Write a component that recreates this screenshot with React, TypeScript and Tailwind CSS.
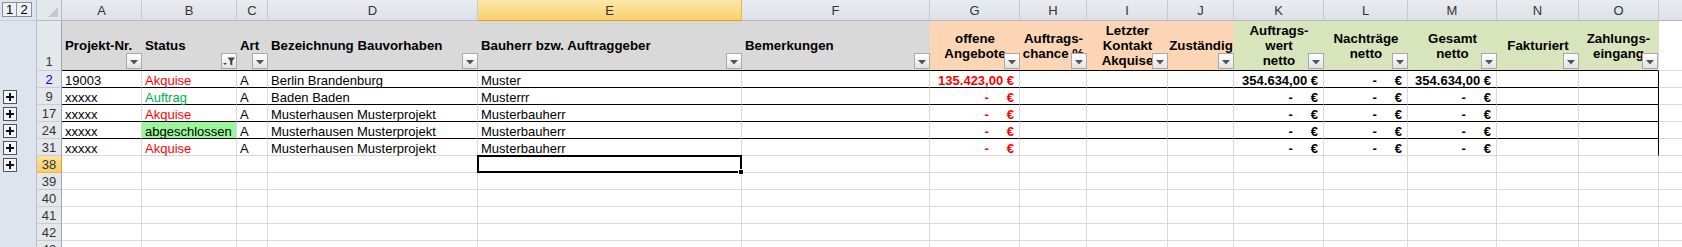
import React from 'react';

type Hdr = { lines: string[]; bg: 'gray' | 'peach' | 'green'; center?: boolean; active?: boolean };

const LETTERS = ['A', 'B', 'C', 'D', 'E', 'F', 'G', 'H', 'I', 'J', 'K', 'L', 'M', 'N', 'O'];

const HEADERS: Hdr[] = [
  { lines: ['Projekt-Nr.'], bg: 'gray' },
  { lines: ['Status'], bg: 'gray', active: true },
  { lines: ['Art'], bg: 'gray' },
  { lines: ['Bezeichnung Bauvorhaben'], bg: 'gray' },
  { lines: ['Bauherr bzw. Auftraggeber'], bg: 'gray' },
  { lines: ['Bemerkungen'], bg: 'gray' },
  { lines: ['offene', 'Angebote'], bg: 'peach', center: true },
  { lines: ['Auftrags-', 'chance %'], bg: 'peach', center: true },
  { lines: ['Letzter', 'Kontakt', 'Akquise'], bg: 'peach', center: true },
  { lines: ['Zuständig'], bg: 'peach', center: true },
  { lines: ['Auftrags-', 'wert', 'netto'], bg: 'green', center: true },
  { lines: ['Nachträge', 'netto'], bg: 'green', center: true },
  { lines: ['Gesamt', 'netto'], bg: 'green', center: true },
  { lines: ['Fakturiert'], bg: 'green', center: true },
  { lines: ['Zahlungs-', 'eingang'], bg: 'green', center: true },
];

type Row = {
  n: string;
  blue?: boolean;
  plus?: boolean;
  data: boolean;
  blackBottom?: boolean;
  status?: 'akq' | 'auf' | 'abg';
  a?: string;
  c?: string;
  d?: string;
  e?: string;
  g?: string;
  k?: string;
  l?: string;
  m?: string;
};

const ROWS: Row[] = [
  { n: '2', blue: true, data: true, blackBottom: true, a: '19003', status: 'akq', c: 'A', d: 'Berlin Brandenburg', e: 'Muster', g: '135.423,00 €', k: '354.634,00 €', l: '-', m: '354.634,00 €' },
  { n: '9', plus: true, data: true, blackBottom: true, a: 'xxxxx', status: 'auf', c: 'A', d: 'Baden Baden', e: 'Musterrr', g: '-', k: '-', l: '-', m: '-' },
  { n: '17', plus: true, data: true, blackBottom: true, a: 'xxxxx', status: 'akq', c: 'A', d: 'Musterhausen Musterprojekt', e: 'Musterbauherr', g: '-', k: '-', l: '-', m: '-' },
  { n: '24', plus: true, data: true, blackBottom: true, a: 'xxxxx', status: 'abg', c: 'A', d: 'Musterhausen Musterprojekt', e: 'Musterbauherr', g: '-', k: '-', l: '-', m: '-' },
  { n: '31', plus: true, data: true, a: 'xxxxx', status: 'akq', c: 'A', d: 'Musterhausen Musterprojekt', e: 'Musterbauherr', g: '-', k: '-', l: '-', m: '-' },
  { n: '38', plus: true, data: false },
  { n: '39', data: false },
  { n: '40', data: false },
  { n: '41', data: false },
  { n: '42', data: false },
  { n: '43', data: false },
];

function FilterBtn({ active }: { active?: boolean }) {
  return (
    <div className="absolute right-0 bottom-[1px] z-10 flex h-[16px] w-[16px] items-center justify-center border border-[#a9a9a9] bg-linear-to-b from-white to-[#e3e3e3]">
      {active ? (
        <svg width="14" height="12" viewBox="0 0 14 12">
          <path d="M1 8 H5 L3 10 Z" fill="#444" />
          <path d="M5.5 2.5 H13 L10.3 6 V10.5 L8.2 9.5 V6 Z" fill="#444" />
        </svg>
      ) : (
        <svg width="8" height="5" viewBox="0 0 8 5" className="mt-[2px]">
          <path d="M0 0 H8 L4 4.5 Z" fill="#555" />
        </svg>
      )}
    </div>
  );
}

function Money({ v, red }: { v?: string; red?: boolean }) {
  if (!v) return null;
  const color = red ? 'text-[#ff0000]' : 'text-black';
  if (v === '-') {
    return (
      <div className={`flex w-full justify-end pr-[5px] font-bold ${color}`}>
        <span>-</span>
        <span className="ml-[18px]">€</span>
      </div>
    );
  }
  return <div className={`w-full pr-[5px] text-right font-bold ${color}`}>{v}</div>;
}

export default function App() {
  const gridCols =
    'grid-cols-[37px_25px_80px_95px_31px_210px_264px_188px_90px_67px_81px_66px_90px_84px_89px_82px_80px_1fr]';

  const cells: React.ReactNode[] = [];

  cells.push(
    <div key="g0" className="flex items-start gap-0 border-r border-b border-r-[#b9c0cc] border-b-[#c8cdd6] bg-[#dfe3ee] pt-[2px] pl-[2px]">
      <div className="flex h-[15px] w-[15px] items-center justify-center border border-[#8a8f98] bg-[#eef0f4] text-[13px] leading-none text-black">1</div>
      <div className="flex h-[15px] w-[15px] items-center justify-center border border-l-0 border-[#8a8f98] bg-[#eef0f4] text-[13px] leading-none text-black">2</div>
    </div>
  );
  cells.push(
    <div key="corner" className="relative border-r border-b border-[#b4bac3] bg-[#e4e7ec]">
      <svg width="10" height="10" viewBox="0 0 10 10" className="absolute right-[3px] bottom-[3px]">
        <path d="M10 0 V10 H0 Z" fill="#c3c7cd" />
      </svg>
    </div>
  );
  LETTERS.forEach((L) => {
    const sel = L === 'E';
    cells.push(
      <div
        key={'h' + L}
        className={
          sel
            ? 'flex justify-center border-r border-b border-r-[#f0b44c] border-b-[#e39b2d] bg-linear-to-b from-[#fde8a8] to-[#f9cf6a] pt-[2px] text-[13px] leading-[18px] text-[#333]'
            : 'flex justify-center border-r border-b border-r-[#c5cad2] border-b-[#b4bac3] bg-linear-to-b from-[#e9ecf1] to-[#dde1e7] pt-[2px] text-[13px] leading-[18px] text-[#333]'
        }
      >
        {L}
      </div>
    );
  });
  cells.push(<div key="hP" className="border-b border-b-[#b4bac3] bg-linear-to-b from-[#e9ecf1] to-[#dde1e7]" />);

  cells.push(<div key="g1" className="border-r border-r-[#b9c0cc] bg-[#dfe3ee]" />);
  cells.push(
    <div key="rh1" className="flex items-end justify-center border-r border-b border-r-[#9ea5b0] border-b-[#c8ccd3] bg-[#e4e7ec] pb-[2px] text-[13px] leading-none text-[#333]">
      1
    </div>
  );
  HEADERS.forEach((h, i) => {
    const bg = h.bg === 'gray' ? 'bg-[#d9d9d9]' : h.bg === 'peach' ? 'bg-[#fcd5b4]' : 'bg-[#d8e4bc]';
    const last = i === HEADERS.length - 1;
    cells.push(
      <div
        key={'t' + i}
        className={`relative flex items-center border-b border-b-black ${bg} ${last ? 'border-r border-r-[#d8e4bc]' : ''} ${
          h.center ? 'justify-center text-center' : 'justify-start pl-[3px]'
        }`}
      >
        <div className="text-[13.3px] leading-[15px] font-bold whitespace-nowrap text-black">
          {h.lines.map((ln, j) => (
            <div key={j}>{ln}</div>
          ))}
        </div>
        <FilterBtn active={h.active} />
      </div>
    );
  });
  cells.push(<div key="t1P" className="border-b border-b-[#d9d9d9] bg-white" />);

  ROWS.forEach((r) => {
    const sel = r.n === '38';
    cells.push(
      <div key={'g' + r.n} className="flex items-center border-r border-r-[#b9c0cc] bg-[#dfe3ee] pl-[3px]">
        {r.plus && (
          <div className="flex h-[14px] w-[14px] items-center justify-center border border-[#555] bg-[#f4f5f7]">
            <svg width="8" height="8" viewBox="0 0 8 8">
              <path d="M3 0 H5 V3 H8 V5 H5 V8 H3 V5 H0 V3 H3 Z" fill="#111" />
            </svg>
          </div>
        )}
      </div>
    );
    cells.push(
      <div
        key={'rh' + r.n}
        className={
          sel
            ? 'flex items-end justify-center border-r border-b border-r-[#e39b2d] border-b-[#e9b552] bg-linear-to-b from-[#fbe29a] to-[#f7cd67] pb-[1px] text-[13px] leading-[13px] text-[#333]'
            : r.blue
              ? 'flex items-end justify-center border-r border-b border-r-[#9ea5b0] border-b-[#c8ccd3] bg-[#e4e7ec] pb-[1px] text-[13px] leading-[13px] text-[#0000ff]'
              : 'flex items-end justify-center border-r border-b border-r-[#9ea5b0] border-b-[#c8ccd3] bg-[#e4e7ec] pb-[1px] text-[13px] leading-[13px] text-[#333]'
        }
      >
        {r.n}
      </div>
    );
    LETTERS.forEach((L) => {
      const bb = r.data && r.blackBottom ? 'border-b-black' : 'border-b-[#d9d9d9]';
      const br = r.data && L === 'O' ? 'border-r-black' : 'border-r-[#d9d9d9]';
      let bg = 'bg-white';
      let content: React.ReactNode = null;
      let pad = 'pl-[3px]';
      if (r.data) {
        if (L === 'A') content = r.a;
        if (L === 'B') {
          if (r.status === 'akq') content = <span className="text-[#ff0000]">Akquise</span>;
          if (r.status === 'auf') content = <span className="text-[#00b050]">Auftrag</span>;
          if (r.status === 'abg') {
            content = <span className="text-black">abgeschlossen</span>;
            bg = 'bg-[#9cf59c]';
          }
        }
        if (L === 'C') content = r.c;
        if (L === 'D') content = r.d;
        if (L === 'E') content = r.e;
        if (L === 'G') {
          content = <Money v={r.g} red />;
          pad = 'pl-0';
        }
        if (L === 'K') {
          content = <Money v={r.k} />;
          pad = 'pl-0';
        }
        if (L === 'L') {
          content = <Money v={r.l} />;
          pad = 'pl-0';
        }
        if (L === 'M') {
          content = <Money v={r.m} />;
          pad = 'pl-0';
        }
      }
      cells.push(
        <div
          key={r.n + L}
          className={`relative flex items-end border-r border-b ${bb} ${br} ${bg} ${pad} text-[13px] leading-[12px] whitespace-nowrap text-black`}
        >
          {content}
          {sel && L === 'E' && (
            <div className="pointer-events-none absolute -top-[1px] -left-[1px] -right-[1px] -bottom-[1px] z-20 border-2 border-black">
              <div className="absolute -right-[4px] -bottom-[4px] h-[6px] w-[6px] border border-white bg-black" />
            </div>
          )}
        </div>
      );
    });
    cells.push(<div key={r.n + 'P'} className="border-b border-b-[#d9d9d9] bg-white" />);
  });

  return (
    <div className="h-[247px] w-[1682px] overflow-hidden bg-white font-['Liberation_Sans',Arial,sans-serif]">
      <div className={`grid ${gridCols} grid-rows-[21px_50px_repeat(11,17px)]`}>{cells}</div>
    </div>
  );
}
